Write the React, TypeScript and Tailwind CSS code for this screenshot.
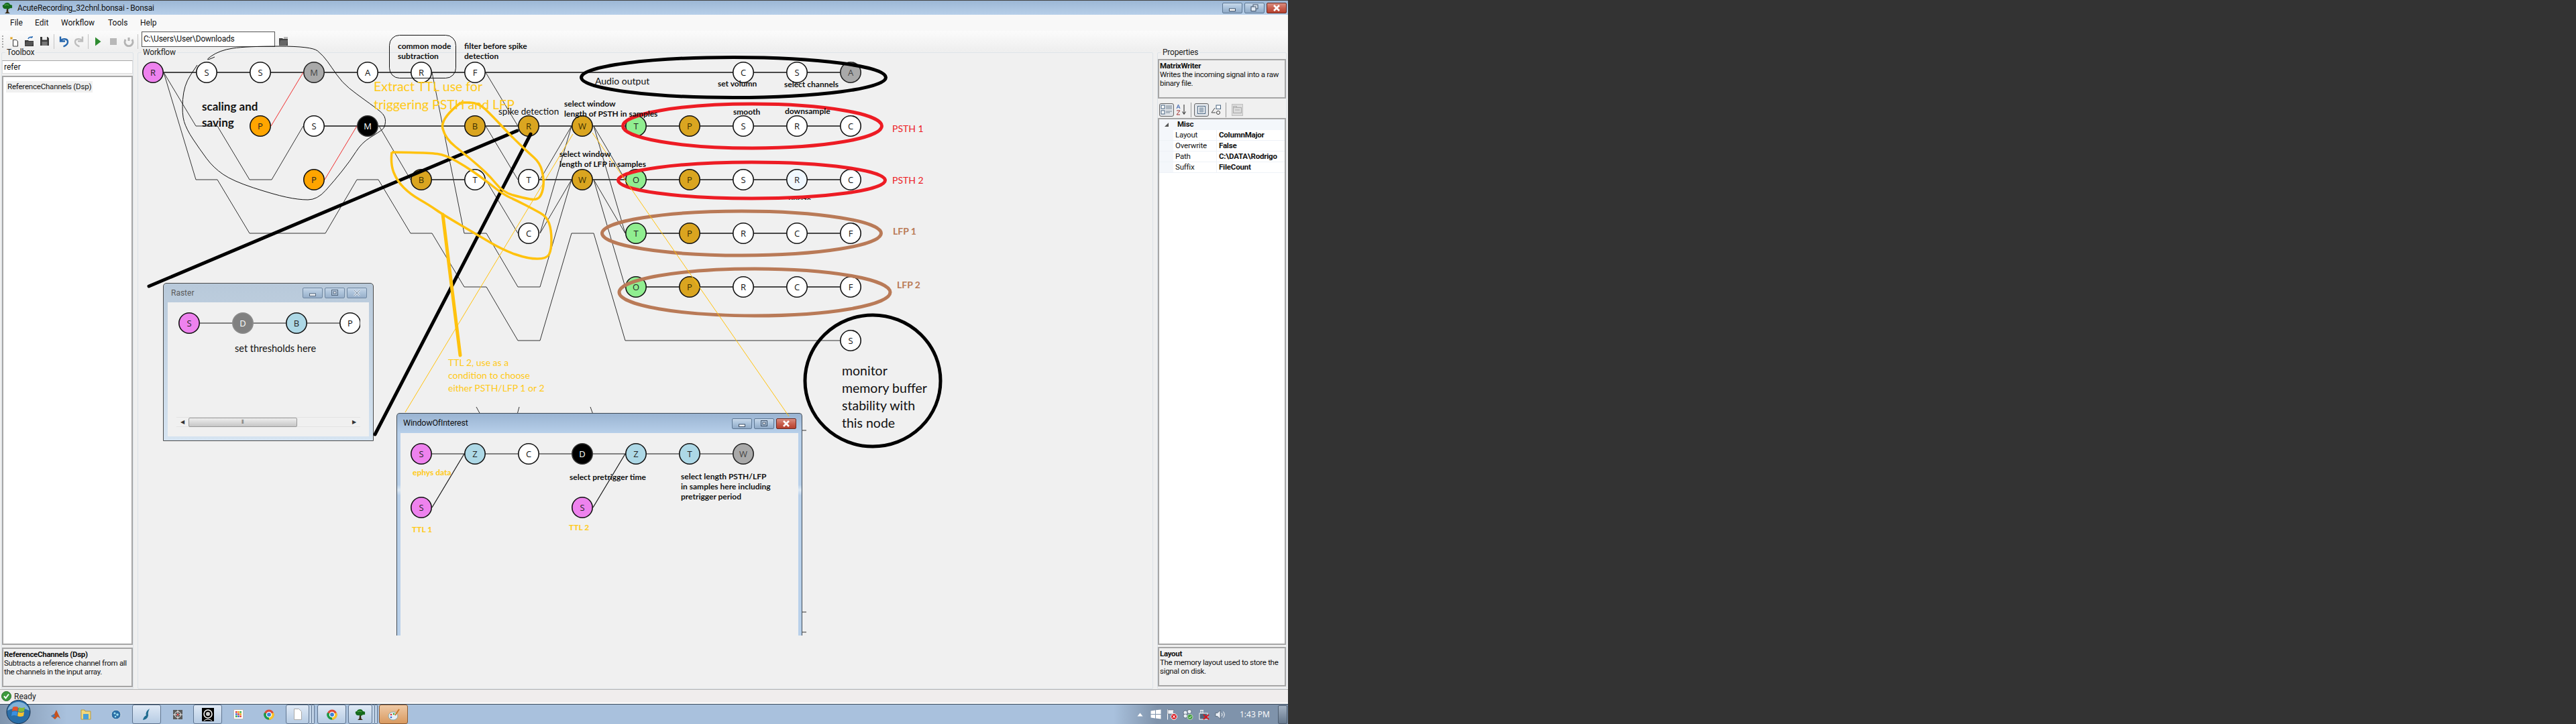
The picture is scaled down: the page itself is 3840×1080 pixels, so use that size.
import React from "react";

type Pt = [number, number];
type NodeDef = [number, number, string, keyof typeof fills];

const fills = {
  w: { fill: "#ffffff", ink: "#111111", ring: "#111111" },
  pink: { fill: "#ee82ee", ink: "#222222", ring: "#111111" },
  gray: { fill: "#a9a9a9", ink: "#444444", ring: "#222222" },
  dim: { fill: "#808080", ink: "#ffffff", ring: "#8c8c8c" },
  black: { fill: "#000000", ink: "#ffffff", ring: "#333333" },
  orange: { fill: "#ffa500", ink: "#222222", ring: "#111111" },
  gold: { fill: "#daa520", ink: "#3a3000", ring: "#111111" },
  green: { fill: "#90ee90", ink: "#222222", ring: "#111111" },
  blue: { fill: "#add8e6", ink: "#222222", ring: "#111111" },
  pale: { fill: "#f0f8ff", ink: "#222222", ring: "#111111" },
};

const mainNodes: NodeDef[] = [
  [228, 108, "R", "pink"], [308, 108, "S", "w"], [388, 108, "S", "w"], [468, 108, "M", "gray"], [548, 108, "A", "w"],
  [628, 108, "R", "w"], [708, 108, "F", "w"], [1108, 108, "C", "w"], [1188, 108, "S", "w"], [1268, 108, "A", "gray"],
  [388, 188, "P", "orange"], [468, 188, "S", "w"], [548, 188, "M", "black"], [708, 188, "B", "gold"], [788, 188, "R", "gold"],
  [868, 188, "W", "gold"], [948, 188, "T", "green"], [1028, 188, "P", "gold"], [1108, 188, "S", "w"], [1188, 188, "R", "w"],
  [1268, 188, "C", "w"],
  [468, 268, "P", "orange"], [628, 268, "B", "gold"], [708, 268, "T", "w"], [788, 268, "T", "w"], [868, 268, "W", "gold"],
  [948, 268, "O", "green"], [1028, 268, "P", "gold"], [1108, 268, "S", "w"], [1188, 268, "R", "pale"], [1268, 268, "C", "w"],
  [788, 348, "C", "w"], [948, 348, "T", "green"], [1028, 348, "P", "gold"], [1108, 348, "R", "w"], [1188, 348, "C", "w"],
  [1268, 348, "F", "w"],
  [948, 428, "O", "green"], [1028, 428, "P", "gold"], [1108, 428, "R", "w"], [1188, 428, "C", "w"], [1268, 428, "F", "w"],
  [1268, 508, "S", "w"],
];

const straight: Pt[][] = [
  [[228, 108], [708, 108]],
  [[708, 108], [1268, 108]],
  [[468, 188], [1268, 188]],
  [[628, 268], [708, 268]],
  [[788, 268], [1268, 268]],
  [[948, 348], [1268, 348]],
  [[948, 428], [1268, 428]],
];

const routed: Pt[][] = [
  [[244, 108], [292, 188], [324, 188], [372, 268], [405, 268], [452, 188]],
  [[244, 108], [292, 268], [324, 268], [372, 348], [485, 348], [532, 268], [564, 268], [612, 348], [644, 348], [692, 428], [725, 428], [772, 508], [805, 508], [852, 348], [885, 348], [932, 508], [1252, 508]],
  [[565, 188], [612, 268]],
  [[724, 108], [772, 188]],
  [[724, 188], [772, 268]],
  [[644, 108], [692, 348], [725, 348], [772, 428], [805, 428], [852, 268]],
  [[724, 268], [772, 348]],
  [[805, 348], [852, 188]],
  [[805, 348], [852, 268]],
  [[805, 268], [852, 188]],
  [[885, 188], [932, 268]],
  [[885, 188], [932, 348]],
  [[885, 268], [932, 348]],
  [[885, 268], [932, 428]],
  [[710, 607], [716, 618]],
  [[774, 607], [771, 618]],
  [[880, 607], [884, 618]],
  [[1196, 642], [1202, 642]],
  [[1196, 913], [1202, 913]],
  [[1196, 943], [1202, 943]],
];

const lassoBlack: Pt[] = [
  [320, 85], [302, 93], [327, 75], [367, 69], [465, 69], [482, 83], [494, 100], [510, 123], [531, 140], [559, 160], [575, 173],
  [574, 190], [565, 197], [539, 213], [522, 240], [498, 270], [473, 298], [445, 298], [408, 290], [347, 270], [318, 250],
  [298, 223], [278, 193], [271, 170], [274, 127], [294, 97],
];

const loopA: Pt[] = [
  [687, 153], [656, 177], [664, 207], [693, 230], [728, 260], [750, 287], [779, 295], [801, 299], [809, 287], [811, 267],
  [805, 243], [787, 227], [762, 203], [734, 173], [713, 153], [687, 153],
];

const loopB: Pt[] = [
  [584, 227], [582, 245], [592, 270], [612, 290], [640, 306], [660, 320], [711, 350], [750, 373], [787, 386], [815, 386],
  [822, 373], [822, 343], [815, 323], [795, 312], [772, 300], [750, 290], [725, 270], [697, 250], [664, 231], [640, 228], [584, 227],
];

const toPath = (pts: Pt[]) => pts.map((p, i) => `${i ? "L" : "M"}${p[0]} ${p[1]}`).join(" ");

// rounds a hand drawn stroke by running through the midpoints
const smooth = (pts: Pt[]) => {
  let d = `M${pts[0][0]} ${pts[0][1]}`;
  for (let i = 1; i < pts.length - 1; i++) {
    const mx = (pts[i][0] + pts[i + 1][0]) / 2;
    const my = (pts[i][1] + pts[i + 1][1]) / 2;
    d += ` Q${pts[i][0]} ${pts[i][1]} ${mx} ${my}`;
  }
  const last = pts[pts.length - 1];
  return `${d} L${last[0]} ${last[1]}`;
};

const Node = ({ n }: { n: NodeDef }) => {
  const [x, y, label, kind] = n;
  const c = fills[kind];
  return (
    <g>
      <circle cx={x} cy={y} r={15.2} fill={c.fill} stroke={c.ring} strokeWidth={1.6} />
      <text x={x} y={y} textAnchor="middle" dominantBaseline="central" fill={c.ink} className="text-[13px] [font-family:'Open_Sans',sans-serif]">
        {label}
      </text>
    </g>
  );
};

const Note = ({ x, y, lines, gap = 15, className }: { x: number; y: number; lines: string[]; gap?: number; className: string }) => (
  <>
    {lines.map((line, i) => (
      <text key={line} x={x} y={y + i * gap} dominantBaseline="central" className={`[font-family:Lato,sans-serif] ${className}`}>
        {line}
      </text>
    ))}
  </>
);

const CapButton = ({ kind, close = false }: { kind: "min" | "max" | "restore" | "x"; close?: boolean }) => (
  <div
    className={`flex h-[16px] w-[30px] items-center justify-center rounded-[2px] border ${
      close
        ? "border-[#6b2a22] bg-gradient-to-b from-[#d88d80] via-[#c9604f] to-[#b5402e]"
        : "border-[#5d7793] bg-gradient-to-b from-[#c7d8ea] via-[#a9c1da] to-[#8fa9c6]"
    }`}
  >
    <svg width="14" height="12" viewBox="0 0 14 12">
      {kind === "min" && <rect x="2.5" y="7" width="9" height="3.5" fill="#fff" stroke="#3c4f66" strokeWidth="1" />}
      {kind === "max" && (
        <>
          <rect x="2.5" y="1.5" width="9" height="8" fill="none" stroke="#3c4f66" strokeWidth="1" />
          <rect x="5" y="4" width="4" height="3" fill="#fff" stroke="#3c4f66" strokeWidth="1" />
        </>
      )}
      {kind === "restore" && (
        <>
          <rect x="5" y="1" width="7" height="6" fill="#dfe9f3" stroke="#3c4f66" />
          <rect x="2" y="4" width="7" height="6.5" fill="#dfe9f3" stroke="#3c4f66" />
        </>
      )}
      {kind === "x" && <path d="M3 2 L11 10 M11 2 L3 10" stroke={close ? "#fff" : "#e8eef5"} strokeWidth="2.6" />}
      {kind === "x" && !close && <path d="M3 2 L11 10 M11 2 L3 10" stroke="#4a5f78" strokeWidth="0.8" />}
    </svg>
  </div>
);

const TreeIcon = ({ size = 18 }: { size?: number }) => (
  <svg width={size} height={size} viewBox="0 0 18 18">
    <path d="M8 10 L7.5 15 L5 17 L13 17 L10.5 15 L10 10Z" fill="#3a2a12" />
    <path d="M2 7 Q1 4 4 4 Q5 1 9 1 Q12 1 13 4 Q17 4 16 7 Q17 10 13 9 Q11 12 8 10 Q3 11 2 7Z" fill="#156a1c" />
    <path d="M5 5 Q8 3 11 5" stroke="#59b04a" strokeWidth="1.2" fill="none" />
  </svg>
);

const ToolSep = () => <div className="mx-[2px] h-[22px] w-px bg-[#c4c4c4]" />;

const ToolCell = ({ children }: { children: React.ReactNode }) => (
  <div className="flex h-[23px] w-[23px] items-center justify-center">{children}</div>
);

const Toolbar = () => (
  <div className="flex h-[31px] items-center bg-gradient-to-b from-[#fbfbfb] to-[#eeeeee] pl-[3px] [font-family:Roboto,sans-serif]">
    <div className="mr-[3px] h-[18px] w-[3px] border-l-2 border-dotted border-[#a8a8a8]" />
    <ToolCell>
      <svg width="16" height="16" viewBox="0 0 16 16">
        <path d="M6.5 5.5h5l2 2.5v7h-7z" fill="#fff" stroke="#333" />
        <path d="M4 1v4M2 3h4M2.5 1.5l3 3M5.5 1.5l-3 3" stroke="#e3a21a" strokeWidth="1" />
      </svg>
    </ToolCell>
    <ToolCell>
      <svg width="16" height="16" viewBox="0 0 16 16">
        <path d="M1 6h5l1 1h7v8H1z" fill="#3a3a3a" />
        <path d="M3 8h11l-2 6H1z" fill="#555" />
        <path d="M6 4c1-3 4-3 6-2M12 2v-2M12 2h-2.500" stroke="#2f6fb5" strokeWidth="1.6" fill="none" />
      </svg>
    </ToolCell>
    <ToolCell>
      <svg width="15" height="15" viewBox="0 0 15 15">
        <path d="M1 1h11l2 2v11H1z" fill="#3a3a3a" />
        <rect x="4" y="1" width="7" height="4.500" fill="#eee" />
        <rect x="3.500" y="8" width="8" height="6" fill="#777" />
      </svg>
    </ToolCell>
    <ToolSep />
    <ToolCell>
      <svg width="18" height="18" viewBox="0 0 18 18">
        <path d="M4 1.500v7h7M4.500 8C7 4 15 4 15 9.500c0 3.500-3 5.500-6.500 7" fill="none" stroke="#2767ad" strokeWidth="2.400" />
      </svg>
    </ToolCell>
    <ToolCell>
      <svg width="18" height="18" viewBox="0 0 18 18">
        <path d="M14 1.500v7H7M13.500 8C11 4 3 4 3 9.500c0 3.500 3 5.500 6.500 7" fill="none" stroke="#bdbdbd" strokeWidth="2.400" />
      </svg>
    </ToolCell>
    <ToolSep />
    <ToolCell>
      <svg width="12" height="16" viewBox="0 0 12 16">
        <path d="M2 1.500 L10.500 8 L2 14.500Z" fill="#2e8b30" />
      </svg>
    </ToolCell>
    <ToolCell>
      <div className="h-[10px] w-[10px] bg-[#b8b8b8]" />
    </ToolCell>
    <ToolCell>
      <svg width="16" height="18" viewBox="0 0 16 18">
        <path d="M8 3v5M3.200 6A6 6 0 1 0 12.800 6" fill="none" stroke="#b3b3b3" strokeWidth="3" />
      </svg>
    </ToolCell>
    <ToolSep />
    <div className="ml-[3px] mt-[-7px] flex h-[23px] w-[199px] items-center border border-[#555] bg-white pl-[2px] text-[12px] tracking-[-0.2px] text-[#111]">
      C:\Users\User\Downloads
    </div>
    <div className="ml-[5px] flex h-[23px] w-[17px] items-center">
      <svg width="15" height="15" viewBox="0 0 15 15">
        <path d="M1 3h5l1 1h7v10H1z" fill="#444" />
        <path d="M8 1h6v3H8z" fill="#bbb" />
        <path d="M3 6h11l-2 8H1z" fill="#666" />
      </svg>
    </div>
  </div>
);

const Group = ({ title, className, children }: { title: string; className: string; children?: React.ReactNode }) => (
  <div className={`relative rounded-[2px] border border-[#dde3e8] ${className}`}>
    <span className="absolute -top-[8px] left-[5px] bg-[#f0f0f0] px-[2px] text-[12px] leading-[15px] tracking-[-0.2px] text-[#222]">{title}</span>
    {children}
  </div>
);

const HelpBox = ({ title, lines, className }: { title: string; lines: string[]; className: string }) => (
  <div className={`overflow-hidden whitespace-nowrap border-2 border-[#a6a6a6] bg-[#f0f0f0] pl-[1px] pt-[1px] text-[11.5px] leading-[13px] tracking-[-0.3px] text-[#111] ${className}`}>
    <div className="font-bold leading-[14px]">{title}</div>
    {lines.map((l) => (
      <div key={l}>{l}</div>
    ))}
  </div>
);

const props = [
  ["Layout", "ColumnMajor"],
  ["Overwrite", "False"],
  ["Path", "C:\\DATA\\Rodrigo"],
  ["Suffix", "FileCount"],
];

const PropertyGrid = () => (
  <div className="flex-1 overflow-hidden border-2 border-[#a6a6a6] bg-white text-[11.5px] tracking-[-0.2px] text-[#111]">
    <div className="flex h-[16px] items-center bg-[#f4f7fb]">
      <svg className="ml-[7px] mr-[12px]" width="8" height="8" viewBox="0 0 8 8">
        <path d="M7 1v6H1z" fill="#555" />
      </svg>
      <span className="font-bold">Misc</span>
    </div>
    {props.map(([k, v]) => (
      <div key={k} className="flex h-[16px] items-center border-b border-[#eef2f7] leading-[15px]">
        <div className="h-full w-[21px] shrink-0 bg-[#f4f7fb]" />
        <div className="w-[64px] shrink-0 pl-[3px]">{k}</div>
        <div className="whitespace-nowrap border-l border-[#eef2f7] pl-[3px] font-bold">{v}</div>
      </div>
    ))}
  </div>
);

const PropsToolbar = () => (
  <div className="flex h-[25px] items-center pl-[2px]">
    <div className="flex h-[20px] w-[22px] items-center justify-center rounded-[3px] border border-[#666] bg-[#dfe3e8]">
      <svg width="18" height="16" viewBox="0 0 18 16">
        <rect x="1" y="1" width="5" height="5" fill="#fff" stroke="#47637f" />
        <rect x="1" y="9" width="5" height="5" fill="#fff" stroke="#47637f" />
        <path d="M8 2h9M8 4h9M8 6h9M8 10h9M8 12h6" stroke="#7a8a99" />
      </svg>
    </div>
    <div className="ml-[3px] flex h-[20px] w-[18px] items-center">
      <svg width="16" height="17" viewBox="0 0 16 17">
        <path d="M1 7l2.500-6 2.500 6M2 5h3" stroke="#3a62b0" fill="none" />
        <path d="M1 10h5l-5 6h5" stroke="#a13030" fill="none" />
        <path d="M12 1v13M9.500 11.500l2.500 4 2.500-4" stroke="#222" fill="none" />
      </svg>
    </div>
    <div className="mx-[4px] h-[22px] w-px bg-[#9a9a9a]" />
    <div className="flex h-[20px] w-[22px] items-center justify-center rounded-[3px] border border-[#666] bg-[#dfe3e8]">
      <svg width="14" height="14" viewBox="0 0 14 14">
        <rect x="1.500" y="1.500" width="11" height="11" fill="#fff" stroke="#47637f" />
        <path d="M3.500 4h7M3.500 6h7M3.500 8h7M3.500 10h7" stroke="#47637f" />
      </svg>
    </div>
    <div className="ml-[3px] flex h-[20px] w-[18px] items-center">
      <svg width="16" height="16" viewBox="0 0 16 16">
        <rect x="8" y="1" width="6.500" height="5.500" fill="#fff" stroke="#47637f" />
        <path d="M1 12L6 5M1 12h6" stroke="#444" fill="none" />
        <circle cx="11" cy="12" r="2.500" fill="#fff" stroke="#333" />
      </svg>
    </div>
    <div className="mx-[4px] h-[22px] w-px bg-[#9a9a9a]" />
    <div className="ml-[4px] flex h-[18px] w-[17px] items-center justify-center border border-[#c0c0c0] bg-[#dcdcdc]">
      <svg width="13" height="11" viewBox="0 0 13 11">
        <rect x="0.500" y="2.500" width="12" height="8" fill="none" stroke="#aaa" />
        <path d="M0.500 2.500V0.500h5v2M3 6h7" stroke="#aaa" fill="none" />
      </svg>
    </div>
  </div>
);

const Glass = ({ children, active = false, className = "w-[43px]" }: { children: React.ReactNode; active?: boolean; className?: string }) => (
  <div
    className={`flex h-[29px] shrink-0 items-center justify-center rounded-[3px] border ${className} ${
      active
        ? "border-[#8a5a32] bg-gradient-to-b from-[#eec9a5] to-[#d99a60]"
        : "border-[#5f7590] bg-gradient-to-b from-[#dfe9f5] to-[#b6cbe3]"
    }`}
  >
    {children}
  </div>
);

const Plain = ({ children }: { children: React.ReactNode }) => (
  <div className="flex h-[29px] w-[45px] shrink-0 items-center justify-center">{children}</div>
);

const Chrome = () => (
  <svg width="16" height="16" viewBox="0 0 16 16">
    <circle cx="8" cy="8" r="7.500" fill="#dd4b39" />
    <path d="M8 8 L1.500 12 A7.500 7.500 0 0 1 1 5.500Z" fill="#1c9a48" />
    <path d="M8 8 L1 5 A7.500 7.500 0 0 0 8 15.500 A7.500 7.500 0 0 0 11 15Z" fill="#1c9a48" />
    <path d="M8 8 L15 5 A7.500 7.500 0 0 1 8 15.500Z" fill="#f8c52c" />
    <circle cx="8" cy="8" r="3.600" fill="#3d82d8" stroke="#fff" strokeWidth="1.300" />
  </svg>
);

const Taskbar = () => (
  <div className="flex h-[30px] items-center border-t border-[#3c4a5a] bg-[linear-gradient(90deg,#7f94ad_0,#a9c1dd_100px,#a9c1dd_1660px,#7f93ab_1725px,#7f93ab_100%)] pl-[9px]">
    <div className="z-10 mr-[14px] h-[36px] w-[37px] shrink-0 self-end">
      <svg width="37" height="36" viewBox="0 0 37 36">
        <circle cx="18.500" cy="18" r="17.500" fill="#2a6ea8" stroke="#18324f" />
        <path d="M2 16 A17 17 0 0 1 35 16 Q18 8 2 16Z" fill="#a7cdea" opacity="0.7" />
        <path d="M10 11 Q14 9 18 11 L17 17 Q13 15 9 17Z" fill="#e2542c" />
        <path d="M19 11 Q23 13 28 11 L27 17 Q22 19 18 17Z" fill="#86bb35" />
        <path d="M9 18 Q13 16 17 18 L16 24 Q12 22 8 24Z" fill="#3b8fe0" />
        <path d="M18 18 Q22 20 27 18 L26 24 Q21 26 17 24Z" fill="#f7c22f" />
      </svg>
    </div>
    <Plain>
      <svg width="16" height="16" viewBox="0 0 16 16">
        <path d="M1 10 L6 7 L9 1 L15 14 L11 11 L7 15Z" fill="#c9501c" />
        <path d="M1 10 L6 7 L7 11 L4 12Z" fill="#3d79b8" />
      </svg>
    </Plain>
    <Plain>
      <svg width="16" height="17" viewBox="0 0 16 17">
        <path d="M1 2h5l1 2h8v12H1z" fill="#f2d77d" stroke="#b89a3c" />
        <rect x="4" y="8" width="8" height="8" fill="#4a9fd8" />
      </svg>
    </Plain>
    <Plain>
      <svg width="16" height="18" viewBox="0 0 16 18">
        <circle cx="8" cy="9" r="7" fill="#2c6ea6" stroke="#cfd9e4" />
        <circle cx="6" cy="7" r="1.600" fill="#9fe0f0" />
        <circle cx="10" cy="9" r="1.800" fill="#9fe0f0" />
        <circle cx="7" cy="12" r="1.300" fill="#9fe0f0" />
      </svg>
    </Plain>
    <Glass className="ml-[2px] w-[43px]">
      <svg width="14" height="20" viewBox="0 0 14 20">
        <path d="M11 1 Q4 6 6 11 Q2 13 1 18 Q8 17 9 11 Q8 7 11 1Z" fill="#1f6b8f" />
      </svg>
    </Glass>
    <div className="ml-[2px]">
      <Plain>
        <svg width="16" height="16" viewBox="0 0 16 16">
          <rect x="1" y="1" width="14" height="14" fill="#5a5a5a" />
          <circle cx="8" cy="8" r="4.500" fill="none" stroke="#fff" />
          <path d="M8 1v14M1 8h14" stroke="#e6e6e6" />
          <circle cx="8" cy="8" r="1.500" fill="#c33" />
        </svg>
      </Plain>
    </div>
    <Glass className="ml-[1px] w-[43px]">
      <svg width="18" height="20" viewBox="0 0 18 20">
        <rect width="18" height="20" fill="#000" />
        <circle cx="9" cy="9" r="6" fill="none" stroke="#fff" strokeWidth="1.500" />
        <circle cx="9" cy="9" r="3" fill="#ccc" />
        <path d="M3 19 Q9 15 15 19" stroke="#fff" fill="none" />
      </svg>
    </Glass>
    <div className="ml-[2px]">
      <Plain>
        <div className="flex h-[15px] w-[15px] items-center justify-center border border-[#bbb] bg-white">
          <svg width="9" height="9" viewBox="0 0 9 9">
            <rect width="2.500" height="2.500" fill="#d33" />
            <rect x="3.200" width="2.500" height="2.500" fill="#e90" />
            <rect x="6.400" width="2.500" height="2.500" fill="#3a3" />
            <rect y="3.200" width="2.500" height="2.500" fill="#36c" />
            <rect x="3.200" y="3.200" width="2.500" height="2.500" fill="#d33" />
            <rect x="6.400" y="3.200" width="2.500" height="2.500" fill="#e90" />
            <rect y="6.400" width="2.500" height="2.500" fill="#3a3" />
            <rect x="3.200" y="6.400" width="2.500" height="2.500" fill="#36c" />
            <rect x="6.400" y="6.400" width="2.500" height="2.500" fill="#d33" />
          </svg>
        </div>
      </Plain>
    </div>
    <Plain>
      <Chrome />
    </Plain>
    <Glass className="ml-[3px] w-[35px]">
      <svg width="12" height="17" viewBox="0 0 12 17">
        <path d="M0.500 0.500h7l4 4v12h-11z" fill="#fff" stroke="#aaa" />
      </svg>
    </Glass>
    <div className="h-[29px] w-[4px] rounded-r-[2px] border border-l-0 border-[#5f7590] bg-[#c2d4e8]" />
    <div className="h-[29px] w-[4px] rounded-r-[2px] border border-l-0 border-[#5f7590] bg-[#c2d4e8]" />
    <Glass className="ml-[4px] w-[43px]">
      <Chrome />
    </Glass>
    <Glass className="ml-[3px] w-[36px]">
      <TreeIcon size={18} />
    </Glass>
    <div className="h-[29px] w-[4px] rounded-r-[2px] border border-l-0 border-[#5f7590] bg-[#c2d4e8]" />
    <div className="h-[29px] w-[4px] rounded-r-[2px] border border-l-0 border-[#5f7590] bg-[#c2d4e8]" />
    <Glass active className="ml-[2px] w-[43px]">
      <svg width="18" height="18" viewBox="0 0 18 18">
        <ellipse cx="8" cy="11" rx="7" ry="6" fill="#e8eef5" stroke="#8aa" />
        <circle cx="5" cy="9" r="1.300" fill="#d33" />
        <circle cx="9" cy="8" r="1.300" fill="#3a3" />
        <circle cx="5" cy="13" r="1.300" fill="#36c" />
        <path d="M11 10 L17 1" stroke="#c87a2a" strokeWidth="2" />
      </svg>
    </Glass>
    <div className="ml-auto flex h-full items-center pr-[1px]">
      <div className="flex w-[24px] justify-center">
        <svg width="9" height="6" viewBox="0 0 9 6">
          <path d="M0.500 5.500L4.500 0.500L8.500 5.500Z" fill="#fff" />
        </svg>
      </div>
      <div className="flex w-[24px] justify-center">
        <svg width="16" height="15" viewBox="0 0 16 15">
          <path d="M0.500 2.500L7 1.500V7H0.500zM8 1.300L15.500 0.500V7H8zM0.500 8H7V13.500L0.500 12.500zM8 8H15.500V14.500L8 13.600z" fill="#fff" />
        </svg>
      </div>
      <div className="flex w-[24px] justify-center">
        <svg width="16" height="16" viewBox="0 0 16 16">
          <path d="M1.500 0.500V15.500" stroke="#fff" />
          <path d="M2 1h9l-1 3 1 3H2z" fill="#eef2f6" stroke="#556" strokeWidth="0.500" />
          <circle cx="11" cy="11" r="4.500" fill="#d8242c" stroke="#fff" />
          <path d="M9 9l4 4M13 9l-4 4" stroke="#fff" />
        </svg>
      </div>
      <div className="flex w-[24px] justify-center">
        <svg width="16" height="16" viewBox="0 0 16 16">
          <circle cx="4" cy="5" r="3" fill="#e8eef5" stroke="#345" strokeWidth="0.600" />
          <circle cx="10" cy="3.500" r="3" fill="#e8eef5" stroke="#345" strokeWidth="0.600" />
          <circle cx="4" cy="10" r="3" fill="#e8eef5" stroke="#345" strokeWidth="0.600" />
          <circle cx="11" cy="11.500" r="4" fill="#3f9c3a" stroke="#fff" strokeWidth="0.600" />
          <path d="M9 11.500l1.500 1.500 2.500-2.800" stroke="#fff" fill="none" />
        </svg>
      </div>
      <div className="flex w-[24px] justify-center">
        <svg width="16" height="16" viewBox="0 0 16 16">
          <rect x="1" y="6" width="12" height="9" fill="#51647a" stroke="#fff" />
          <path d="M3 1v5M6 1v5M2 1.500h5" stroke="#fff" />
          <path d="M7 8l8 7M15 8l-8 7" stroke="#d8141c" strokeWidth="2" />
        </svg>
      </div>
      <div className="flex w-[24px] justify-center">
        <svg width="16" height="16" viewBox="0 0 16 16">
          <path d="M1 5.500h3l4-4v13l-4-4H1z" fill="#e8eef5" stroke="#345" strokeWidth="0.600" />
          <path d="M10 5.500q2 2.500 0 5M12.500 3.500q3.500 4.500 0 9" stroke="#fff" fill="none" />
        </svg>
      </div>
      <span className="ml-[17px] w-[57px] text-[12px] text-white [font-family:'Open_Sans',sans-serif]">1:43 PM</span>
      <div className="h-[28px] w-[14px] rounded-[2px] border border-[#4d5d70] bg-gradient-to-b from-[#a3b1c2] to-[#66788d]" />
    </div>
  </div>
);

function toPathLine(pts: Pt[]) {
  return <path d={toPath(pts)} stroke="#111" strokeWidth={1.2} fill="none" />;
}

const RasterWindow = () => (
  <div className="absolute left-[243px] top-[422px] flex h-[236px] w-[314px] flex-col rounded-t-[5px] border border-[#4a4a4a] bg-gradient-to-b from-[#b8c9da] to-[#d6e4f1] [font-family:Roboto,sans-serif]">
    <div className="flex h-[28px] shrink-0 items-center pl-[11px] pr-[9px]">
      <span className="text-[12px] text-[#5a5a5a]">Raster</span>
      <div className="ml-auto flex gap-[3px] opacity-80">
        <CapButton kind="min" />
        <CapButton kind="max" />
        <CapButton kind="x" />
      </div>
    </div>
    <div className="mx-[6px] h-[200px] bg-[#f0f0f0] px-[13px]">
      <svg className="block" width="274" height="171" viewBox="263 451 274 171">
        {toPathLine([[282, 482], [521, 482]])}
        <Node n={[282, 482, "S", "pink"]} />
        <Node n={[362, 482, "D", "dim"]} />
        <Node n={[442, 482, "B", "blue"]} />
        <Node n={[522, 482, "P", "w"]} />
        <Note x={350} y={519} lines={["set thresholds here"]} className="fill-[#111] text-[14.5px]" />
      </svg>
      <div className="flex h-[15px] items-center bg-[#f0f0f0] shadow-[inset_0_1px_0_#e3e3e3,inset_0_-1px_0_#e3e3e3]">
        <span className="w-[18px] pl-[6px] text-[8px] leading-none text-[#333]">◀</span>
        <div className="flex h-[14px] w-[162px] items-center justify-center rounded-[2px] border border-[#999] bg-gradient-to-b from-[#eeeeee] to-[#c6c6c6] text-[8px] text-[#555]">
          ⦀
        </div>
        <span className="ml-auto pr-[6px] text-[8px] leading-none text-[#333]">▶</span>
      </div>
    </div>
  </div>
);

const InterestWindow = () => (
  <div className="absolute left-[591px] top-[616px] flex h-[332px] w-[605px] flex-col rounded-t-[5px] border-x border-t border-[#3f4a55] bg-[linear-gradient(180deg,#9ab4d2_0,#b8d0ea_30px,#b8d0ea_106px,#dce9f5_114px,#b8d0ea_122px)] [font-family:Roboto,sans-serif]">
    <div className="flex h-[29px] shrink-0 items-center pl-[9px] pr-[8px]">
      <span className="text-[12.5px] tracking-[-0.2px] text-[#111]">WindowOfInterest</span>
      <div className="ml-auto flex gap-[3px]">
        <CapButton kind="min" />
        <CapButton kind="max" />
        <CapButton kind="x" close />
      </div>
    </div>
    <div className="mx-[5px] flex-1 bg-[#f0f0f0]">
      <svg className="block" width="592" height="302" viewBox="597 646 592 302">
        {toPathLine([[628, 677], [1108, 677]])}
        {toPathLine([[644, 757], [692, 677]])}
        {toPathLine([[884, 757], [932, 677]])}
        <Node n={[628, 677, "S", "pink"]} />
        <Node n={[708, 677, "Z", "blue"]} />
        <Node n={[788, 677, "C", "w"]} />
        <Node n={[868, 677, "D", "black"]} />
        <Node n={[948, 677, "Z", "blue"]} />
        <Node n={[1028, 677, "T", "blue"]} />
        <Node n={[1108, 677, "W", "gray"]} />
        <Node n={[628, 757, "S", "pink"]} />
        <Node n={[868, 757, "S", "pink"]} />
        <Note x={615} y={704} lines={["ephys data"]} className="fill-[#ffc917] text-[12px] font-bold" />
        <Note x={614} y={789} lines={["TTL 1"]} className="fill-[#ffc917] text-[12px] font-bold" />
        <Note x={848} y={786} lines={["TTL 2"]} className="fill-[#ffc917] text-[12px] font-bold" />
        <Note x={849} y={711} lines={["select pretrigger time"]} className="fill-[#111] text-[12px] font-bold" />
        <Note x={1015} y={710} lines={["select length PSTH/LFP", "in samples here including", "pretrigger period"]} className="fill-[#111] text-[12px] font-bold" />
      </svg>
    </div>
  </div>
);

export default function App() {
  return (
    <div className="flex h-[1080px] w-[3840px] overflow-hidden bg-[#333333]">
      <div className="relative flex h-[1080px] w-[1920px] shrink-0 flex-col bg-[#f0f0f0] [font-family:Roboto,sans-serif]">
        {/* title bar */}
        <div className="flex h-[22px] shrink-0 items-center border-t border-[#444] bg-gradient-to-b from-[#9cb7d5] to-[#b7cfe9] pl-[2px] pr-[2px]">
          <TreeIcon />
          <span className="ml-[6px] text-[12px] tracking-[-0.2px] text-[#111]">AcuteRecording_32chnl.bonsai - Bonsai</span>
          <div className="ml-auto flex gap-[3px]">
            <CapButton kind="min" />
            <CapButton kind="restore" />
            <CapButton kind="x" close />
          </div>
        </div>
        {/* menu */}
        <div className="flex h-[24px] shrink-0 items-center bg-[#f8f8f8] pl-[15px] text-[12px] text-[#111]">
          <span className="w-[37px]">File</span>
          <span className="w-[39px]">Edit</span>
          <span className="w-[70px]">Workflow</span>
          <span className="w-[48px]">Tools</span>
          <span>Help</span>
        </div>
        <Toolbar />
        {/* panels */}
        <div className="flex h-[951px] shrink-0 pl-[2px] pr-[2px] pt-[1px]">
          <Group title="Toolbox" className="flex w-[197px] flex-col">
            <div className="mt-[11px] flex h-[20px] items-center border border-[#dcdcdc] border-t-[#a8a8a8] bg-white pl-[2px] text-[12px] text-[#111]">
              refer
            </div>
            <div className="mt-[3px] flex-1 border-2 border-[#a6a6a6] bg-white pl-[4px] pt-[1px]">
              <div className="inline-block bg-[#f0f0f0] px-[2px] text-[11.5px] leading-[17px] tracking-[-0.2px] text-[#111]">ReferenceChannels (Dsp)</div>
            </div>
            <HelpBox
              className="mb-[2px] mt-[4px] h-[59px]"
              title="ReferenceChannels (Dsp)"
              lines={["Subtracts a reference channel from all", "the channels in the input array."]}
            />
          </Group>
          <Group title="Workflow" className="ml-[6px] w-[1514px]" />
          <Group title="Properties" className="ml-[6px] flex w-[193px] flex-col">
            <HelpBox
              className="mt-[9px] h-[59px]"
              title="MatrixWriter"
              lines={["Writes the incoming signal into a raw", "binary file."]}
            />
            <div className="mt-[4px]">
              <PropsToolbar />
            </div>
            <PropertyGrid />
            <HelpBox
              className="mb-[3px] mt-[3px] h-[59px]"
              title="Layout"
              lines={["The memory layout used to store the", "signal on disk."]}
            />
          </Group>
        </div>
        {/* status */}
        <div className="flex h-[22px] shrink-0 items-center gap-[4px] border-b-2 border-t border-b-white border-t-[#b5b5b5] bg-[#f0eded] pl-[2px] text-[12px] text-[#222]">
          <svg width="15" height="15" viewBox="0 0 15 15">
            <circle cx="7.500" cy="7.500" r="7" fill="#3e9a3c" stroke="#2a6e2a" />
            <path d="M4 7.500l2.500 3 4.500-6" stroke="#fff" strokeWidth="2" fill="none" />
          </svg>
          Ready
        </div>
        <Taskbar />

        {/* workflow graph, free canvas in page coordinates */}
        <svg className="pointer-events-none absolute left-0 top-0" width="1920" height="1080" viewBox="0 0 1920 1080">
          {straight.map((l, i) => (
            <path key={i} d={toPath(l)} stroke="#111" strokeWidth={1.3} fill="none" />
          ))}
          {routed.map((l, i) => (
            <path key={i} d={toPath(l)} stroke="#333" strokeWidth={1} fill="none" />
          ))}
          <path d="M404 188L452 108" stroke="#f03030" strokeWidth={1} />
          <path d="M484 268L532 188" stroke="#f03030" strokeWidth={1} />
          {mainNodes.map((n, i) => (
            <Node key={i} n={n} />
          ))}
          <foreignObject x="1175" y="290" width="70" height="8">
            <div className="h-[8px] overflow-hidden text-[12px] font-bold leading-[15px] text-[#111] [font-family:Lato,sans-serif]">Resize</div>
          </foreignObject>
        </svg>

        <RasterWindow />
        <InterestWindow />

        {/* hand drawn annotations on top of everything */}
        <svg className="pointer-events-none absolute left-0 top-0" width="1920" height="1080" viewBox="0 0 1920 1080">
          <rect x="580.500" y="52.500" width="99" height="64" rx="15" fill="none" stroke="#111" strokeWidth={1} />
          <path d={smooth(lassoBlack)} fill="none" stroke="#111" strokeWidth={1} />

          <ellipse cx="1093.500" cy="115.500" rx="227" ry="30" fill="none" stroke="#000" strokeWidth={5} />
          <ellipse cx="1121.500" cy="188" rx="193" ry="33" fill="none" stroke="#ed1c24" strokeWidth={5} />
          <ellipse cx="1120.500" cy="269" rx="199" ry="27" fill="none" stroke="#ed1c24" strokeWidth={5} />
          <ellipse cx="1105.500" cy="348" rx="208" ry="33" fill="none" stroke="#b97a57" strokeWidth={5} />
          <ellipse cx="1125" cy="436" rx="202" ry="35" fill="none" stroke="#b97a57" strokeWidth={5} />
          <ellipse cx="1301" cy="568" rx="101" ry="98" fill="none" stroke="#000" strokeWidth={5} />

          <path d="M854 200L604 615" stroke="#ffc20e" strokeWidth={1} />
          <path d="M883 198L1176 621" stroke="#ffc20e" strokeWidth={1} />
          <path d="M222 427L771 195" stroke="#000" strokeWidth={5} strokeLinecap="round" />
          <path d="M559 648L791 200" stroke="#000" strokeWidth={5} strokeLinecap="round" />
          <path d={smooth(loopA)} fill="none" stroke="#ffc20e" strokeWidth={3.500} strokeLinejoin="round" />
          <path d={smooth(loopB)} fill="none" stroke="#ffc20e" strokeWidth={3.500} strokeLinejoin="round" />
          <path d="M660 320L686 530" stroke="#ffc20e" strokeWidth={5} strokeLinecap="round" />

          <Note x={557} y={128} gap={27} lines={["Extract TTL use for", "triggering PSTH and LFP"]} className="fill-[#ffc917] text-[19.5px]" />
          <Note x={301} y={158} gap={24} lines={["scaling and", "saving"]} className="fill-[#111] text-[17px] font-bold" />
          <Note x={593} y={68} lines={["common mode", "subtraction"]} className="fill-[#111] text-[12px] font-bold" />
          <Note x={692} y={68} lines={["filter before spike", "detection"]} className="fill-[#111] text-[12px] font-bold" />
          <Note x={887} y={120} lines={["Audio output"]} className="fill-[#111] text-[14px]" />
          <Note x={1070} y={124} lines={["set volumn"]} className="fill-[#111] text-[12px] font-bold" />
          <Note x={1169} y={125} lines={["select channels"]} className="fill-[#111] text-[12px] font-bold" />
          <Note x={841} y={154} lines={["select window", "length of PSTH in samples"]} className="fill-[#111] text-[12px] font-bold" />
          <Note x={743} y={166} lines={["spike detection"]} className="fill-[#111] text-[13.5px]" />
          <Note x={1093} y={166} lines={["smooth"]} className="fill-[#111] text-[12px] font-bold" />
          <Note x={1170} y={165} lines={["downsample"]} className="fill-[#111] text-[12px] font-bold" />
          <Note x={834} y={229} lines={["select window", "length of LFP in samples"]} className="fill-[#111] text-[12px] font-bold" />
          <Note x={1330} y={191} lines={["PSTH 1"]} className="fill-[#ed1c24] text-[14px]" />
          <Note x={1330} y={268} lines={["PSTH 2"]} className="fill-[#ed1c24] text-[14px]" />
          <Note x={1331} y={344} lines={["LFP 1"]} className="fill-[#b97a57] text-[14px] font-bold" />
          <Note x={1337} y={424} lines={["LFP 2"]} className="fill-[#b97a57] text-[14px] font-bold" />
          <Note x={668} y={540} gap={19} lines={["TTL 2, use as a", "condition to choose", "either PSTH/LFP 1 or 2"]} className="fill-[#ffc917] text-[14px]" />
          <Note x={1255} y={552} gap={26} lines={["monitor", "memory buffer", "stability with", "this node"]} className="fill-[#111] text-[19.5px]" />
        </svg>
      </div>
    </div>
  );
}
